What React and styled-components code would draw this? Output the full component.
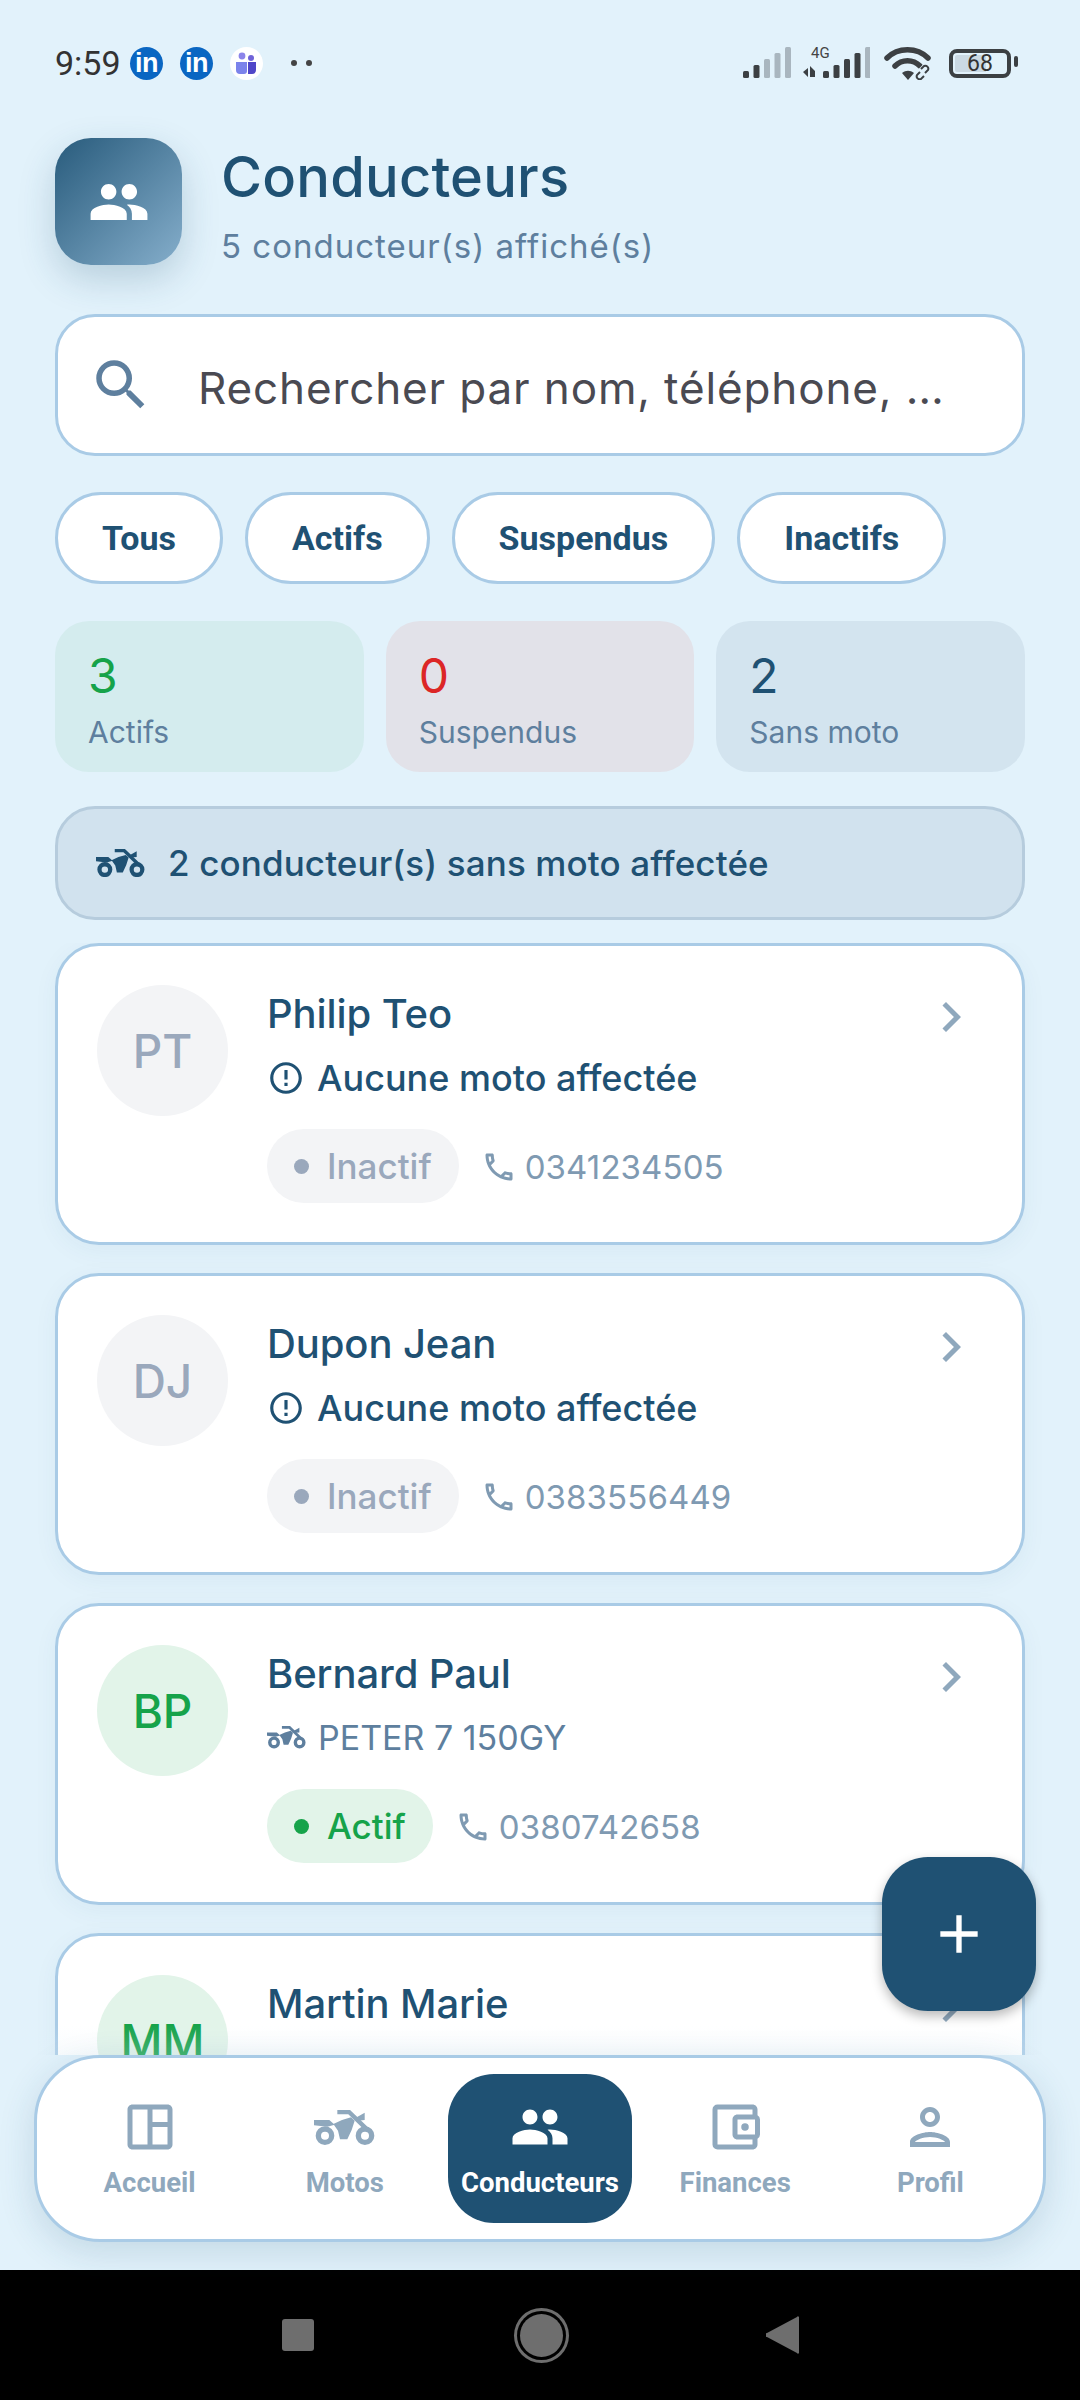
import React from "react";
import styled, { createGlobalStyle } from "styled-components";
import {
  MdPeople,
  MdSearch,
  MdChevronRight,
  MdErrorOutline,
  MdOutlineCall,
  MdAdd,
  MdOutlineSpaceDashboard,
  MdOutlineAccountBalanceWallet,
  MdOutlinePerson,
} from "react-icons/md";

const NAVY = "#1f5173";
const MUTED = "#5e7f9e";
const GREY = "#8fa8bd";
const SANS = '"Inter", "Noto Sans", sans-serif';

const Global = createGlobalStyle`
  html, body { margin: 0; padding: 0; background: #000; }
  * { box-sizing: border-box; }
  body { font-family: ${SANS}; }
`;

const Page = styled.div`
  width: 1080px;
  height: 2400px;
  display: flex;
  flex-direction: column;
  overflow: hidden;
`;
const Screen = styled.div`
  position: relative;
  height: 2270px;
  background: #e2f2fb;
  display: flex;
  flex-direction: column;
`;
const StatusBar = styled.div`
  height: 44px;
  margin: 41px 69px 0 55px;
  display: flex;
  align-items: center;
  justify-content: space-between;
`;
const StatusLeft = styled.div`
  display: flex;
  align-items: center;
`;
const Time = styled.span`
  font: 400 34px "Roboto", sans-serif;
  color: #333;
  width: 75px;
  white-space: nowrap;
`;
const AppBadge = styled.span`
  width: 33px;
  height: 33px;
  border-radius: 50%;
  background: #0a66c2;
  color: #fff;
  font: 700 27px/33px "Liberation Sans", sans-serif;
  text-align: center;
  letter-spacing: -0.5px;
  margin-right: 17px;
`;
const TeamsBadge = styled.span`
  width: 33px;
  height: 33px;
  border-radius: 50%;
  background: #fff;
  display: flex;
  align-items: center;
  justify-content: center;
`;
const Dots = styled.span`
  display: flex;
  gap: 9px;
  margin-left: 28px;
`;
const Dot = styled.span`
  width: 6px;
  height: 6px;
  border-radius: 50%;
  background: #444;
`;
const StatusRight = styled.div`
  display: flex;
  align-items: center;
`;
const FourG = styled.span`
  position: relative;
  display: block;
  width: 67px;
  height: 32px;
  margin: 0 14px 0 12px;
`;
const FourGLabel = styled.span`
  position: absolute;
  left: 8px;
  top: -3px;
  font: 400 15px "Roboto", sans-serif;
  color: #444;
`;
const Battery = styled.span`
  position: relative;
  width: 62px;
  height: 29px;
  border: 4px solid #3c4043;
  border-radius: 8px;
  margin-left: 16px;
  display: flex;
  align-items: center;
  justify-content: center;
  background: linear-gradient(90deg, #cbd9e3 0 62%, transparent 62%);
  background-clip: content-box;
  padding: 2px;
  font: 400 23px "Roboto", sans-serif;
  color: #333;
  &::after {
    content: "";
    position: absolute;
    right: -11px;
    top: 3px;
    width: 4px;
    height: 11px;
    border-radius: 2px;
    background: #3c4043;
  }
`;
const Header = styled.div`
  margin: 53px 55px 0 55px;
  height: 127px;
  display: flex;
  align-items: center;
  gap: 39px;
`;
const HeaderIcon = styled.div`
  width: 127px;
  height: 127px;
  border-radius: 36px;
  background: linear-gradient(135deg, #285b7c, #85aecb);
  box-shadow: 0 14px 36px rgba(31, 81, 115, 0.22);
  display: flex;
  align-items: center;
  justify-content: center;
  color: #fff;
`;
const TitleBlock = styled.div`
  display: flex;
  flex-direction: column;
  padding-top: 6px;
`;
const Title = styled.div`
  font-size: 56px;
  line-height: 66px;
  font-weight: 500;
  color: ${NAVY};
  letter-spacing: 0.2px;
`;
const Subtitle = styled.div`
  font-size: 33px;
  line-height: 40px;
  font-weight: 400;
  color: ${MUTED};
  margin-top: 16px;
  letter-spacing: 1px;
`;
const SearchBox = styled.div`
  margin: 49px 55px 0;
  height: 142px;
  background: #fff;
  border: 3px solid #a9cbe6;
  border-radius: 40px;
  display: flex;
  align-items: center;
  padding-left: 30px;
  gap: 44px;
  color: ${MUTED};
`;
const Placeholder = styled.span`
  font-size: 44px;
  color: #4a4a52;
  white-space: nowrap;
  letter-spacing: 0.87px;
  padding-top: 5px;
`;
const Chips = styled.div`
  margin: 36px 55px 0;
  display: flex;
  gap: 22px;
`;
const Chip = styled.div`
  height: 92px;
  padding: 0 44px;
  border: 3px solid #a9cbe6;
  border-radius: 46px;
  background: #fff;
  display: flex;
  align-items: center;
  font: 700 34px "Roboto", sans-serif;
  color: ${NAVY};
`;
const Stats = styled.div`
  margin: 37px 55px 0;
  display: grid;
  grid-template-columns: repeat(3, 1fr);
  gap: 22px;
`;
const Stat = styled.div`
  height: 151px;
  border-radius: 34px;
  background: ${(p) => p.$bg};
  padding: 31px 33px 0;
`;
const StatNumber = styled.div`
  font-size: 48px;
  line-height: 48px;
  font-weight: 400;
  color: ${(p) => p.$color};
`;
const StatLabel = styled.div`
  font-size: 30px;
  line-height: 36px;
  color: ${MUTED};
  margin-top: 14px;
`;
const Alert = styled.div`
  margin: 34px 55px 0;
  height: 114px;
  border-radius: 40px;
  background: #d1e2ee;
  border: 3px solid #b6ccdd;
  display: flex;
  align-items: center;
  gap: 23px;
  padding-left: 38px;
  font-size: 35px;
  letter-spacing: 0.12px;
  font-weight: 500;
  color: ${NAVY};
`;
const ListClip = styled.div`
  position: relative;
  margin-top: 23px;
  flex: 1;
  min-height: 0;
  overflow: hidden;
  padding: 0 55px;
  display: flex;
  flex-direction: column;
  gap: 28px;
  &::after {
    content: "";
    position: absolute;
    left: 0;
    right: 0;
    bottom: 0;
    height: 30px;
    background: linear-gradient(rgba(226, 242, 251, 0), rgba(226, 242, 251, 0.22));
  }
`;
const Card = styled.div`
  flex: none;
  position: relative;
  height: 302px;
  background: #fff;
  border: 3px solid #a9cbe6;
  border-radius: 44px;
  box-shadow: 0 6px 24px rgba(31, 81, 115, 0.05);
  padding: 39px 38px 39px 39px;
  display: flex;
  gap: 39px;
`;
const Avatar = styled.div`
  flex: none;
  width: 131px;
  height: 131px;
  border-radius: 50%;
  background: ${(p) => p.$bg};
  color: ${(p) => p.$color};
  display: flex;
  align-items: center;
  justify-content: center;
  font-size: 46px;
  font-weight: 500;
`;
const CardBody = styled.div`
  display: flex;
  flex-direction: column;
  align-items: flex-start;
`;
const Name = styled.div`
  font-size: 40px;
  line-height: 48px;
  font-weight: 500;
  letter-spacing: -0.1px;
  color: ${NAVY};
  margin-top: 5px;
`;
const MotoLine = styled.div`
  display: flex;
  align-items: center;
  gap: 12px;
  margin-top: 17px;
  height: 48px;
  font-size: ${(p) => (p.$none ? 36 : 34)}px;
  font-weight: ${(p) => (p.$none ? 500 : 400)};
  color: ${(p) => (p.$none ? NAVY : MUTED)};
`;
const MetaRow = styled.div`
  display: flex;
  align-items: center;
  margin-top: 29px;
`;
const Pill = styled.div`
  height: 74px;
  padding: 0 27px;
  border-radius: 37px;
  background: ${(p) => p.$bg};
  color: ${(p) => p.$color};
  display: flex;
  align-items: center;
  gap: 18px;
  font-size: 35px;
  font-weight: 500;
`;
const PillDot = styled.span`
  width: 15px;
  height: 15px;
  border-radius: 50%;
  background: currentColor;
`;
const Phone = styled.div`
  display: flex;
  align-items: center;
  gap: 8px;
  margin-left: 22px;
  padding-top: 2px;
  font-size: 33px;
  color: #7f9ab2;
  letter-spacing: 0.1px;
`;
const Chevron = styled.div`
  position: absolute;
  right: 41px;
  top: 41px;
  color: ${GREY};
  display: flex;
`;
const Fab = styled.div`
  position: absolute;
  left: 882px;
  top: 1857px;
  width: 154px;
  height: 154px;
  border-radius: 46px;
  background: ${NAVY};
  box-shadow: 0 5px 12px rgba(0, 0, 0, 0.28);
  color: #fff;
  display: flex;
  align-items: center;
  justify-content: center;
`;
const Nav = styled.div`
  flex: none;
  margin: 0 34px 28px;
  height: 187px;
  background: #fff;
  border: 3px solid #a9cbe6;
  border-radius: 66px;
  box-shadow: 0 10px 36px rgba(31, 81, 115, 0.16);
  display: grid;
  grid-template-columns: repeat(5, 1fr);
  padding: 16px 15px;
  position: relative;
`;
const NavItem = styled.div`
  display: flex;
  flex-direction: column;
  align-items: center;
  padding-top: 23px;
  border-radius: 46px;
  margin: 0 5.5px;
  background: ${(p) => (p.$active ? NAVY : "transparent")};
  color: ${(p) => (p.$active ? "#fff" : GREY)};
  font: 700 27.5px "Roboto", sans-serif;
  white-space: nowrap;
`;
const NavIcon = styled.div`
  height: 60px;
  display: flex;
  align-items: center;
  justify-content: center;
  margin-bottom: 9px;
`;
const SystemNav = styled.div`
  flex: 1;
  background: #000;
  display: flex;
  align-items: center;
  justify-content: center;
`;
const SysSquare = styled.span`
  width: 32px;
  height: 32px;
  border-radius: 3px;
  background: #6e6e6e;
`;
const SysCircle = styled.span`
  width: 43px;
  height: 43px;
  border-radius: 50%;
  background: #6e6e6e;
  box-shadow: 0 0 0 3px #000, 0 0 0 6px #6e6e6e;
  margin: 0 203px 0 206px;
`;

const Moto = ({ width = 61, color = "currentColor" }) => (
  <svg width={width} viewBox="0 0 183 105" fill={color} aria-hidden="true">
    <path d="M0 30h46l16 14-22 6-40-4z" />
    <path d="M58 42l26-12 27-8 11 10-9 28-13 28H78l-6-26z" />
    <path d="M70 6h35l58 56" fill="none" stroke={color} strokeWidth="13" />
    <path d="M124 24l28-16v22l-20 2z" />
    <circle cx="33" cy="77" r="20" fill="none" stroke={color} strokeWidth="16" />
    <circle cx="153" cy="77" r="20" fill="none" stroke={color} strokeWidth="16" />
  </svg>
);

const Bars = ({ n, on, x = 0 }) => (
  <>
    {Array.from({ length: n }).map((_, i) => {
      const h = 7 + i * 6;
      return (
        <rect
          key={i}
          x={x + i * 10.5}
          y={31 - h}
          width="6"
          height={h}
          rx="1.5"
          fill={i < on ? "#3c4043" : "#a9b6bf"}
        />
      );
    })}
  </>
);

const Wifi = () => (
  <svg width="49" height="34" viewBox="0 0 49 34" fill="none" aria-hidden="true">
    <path d="M3 12C14 1 33 1 44 12" stroke="#3c4043" strokeWidth="5.5" strokeLinecap="round" />
    <path d="M11 20c7-7 18-7 25 0" stroke="#3c4043" strokeWidth="5.5" strokeLinecap="round" />
    <path d="M18 27c4-3 8-3 12 0l-6 7z" fill="#3c4043" />
    <path d="M34 30l9-9" stroke="#e2f2fb" strokeWidth="9" />
    <path d="M36 26l-3 3a3 3 0 0 0 4 4l3-3M41 27l3-3a3 3 0 0 0-4-4l-3 3" stroke="#3c4043" strokeWidth="2" />
  </svg>
);

const Teams = () => (
  <svg width="23" height="23" viewBox="0 0 23 23" aria-hidden="true">
    <circle cx="7" cy="4" r="3.4" fill="#8b84ea" />
    <circle cx="16" cy="6" r="3" fill="#6f63d8" />
    <path d="M1 10h11v9a3 3 0 0 1-3 3H5a4 4 0 0 1-4-4z" fill="#7b83eb" />
    <path d="M13 10h8v8a4 4 0 0 1-4 4h-4z" fill="#4f46c8" />
  </svg>
);

const drivers = [
  { i: "PT", name: "Philip Teo", moto: null, active: false, phone: "0341234505" },
  { i: "DJ", name: "Dupon Jean", moto: null, active: false, phone: "0383556449" },
  { i: "BP", name: "Bernard Paul", moto: "PETER 7 150GY", active: true, phone: "0380742658" },
  { i: "MM", name: "Martin Marie", active: true, partial: true },
];

const stats = [
  { n: "3", l: "Actifs", bg: "#d4ecee", c: "#16a34a" },
  { n: "0", l: "Suspendus", bg: "#e2e2e9", c: "#dc2626" },
  { n: "2", l: "Sans moto", bg: "#d3e4ef", c: NAVY },
];

const navs = [
  { l: "Accueil", icon: <MdOutlineSpaceDashboard size={60} /> },
  { l: "Motos", icon: <Moto /> },
  { l: "Conducteurs", icon: <MdPeople size={60} />, active: true },
  { l: "Finances", icon: <MdOutlineAccountBalanceWallet size={60} /> },
  { l: "Profil", icon: <MdOutlinePerson size={60} /> },
];

export default function App() {
  return (
    <Page>
      <Global />
      <Screen>
        <StatusBar>
          <StatusLeft>
            <Time>9:59</Time>
            <AppBadge>in</AppBadge>
            <AppBadge>in</AppBadge>
            <TeamsBadge>
              <Teams />
            </TeamsBadge>
            <Dots>
              <Dot />
              <Dot />
            </Dots>
          </StatusLeft>
          <StatusRight>
            <svg width="48" height="32" aria-hidden="true">
              <Bars n={5} on={2} />
            </svg>
            <FourG>
              <FourGLabel>4G</FourGLabel>
              <svg width="67" height="32" aria-hidden="true">
                <path d="M0 25l5-4v9zM7 30v-11l5 5v6z" fill="#3c4043" />
                <Bars n={5} on={4} x={20} />
              </svg>
            </FourG>
            <Wifi />
            <Battery>68</Battery>
          </StatusRight>
        </StatusBar>
        <Header>
          <HeaderIcon>
            <MdPeople size={62} />
          </HeaderIcon>
          <TitleBlock>
            <Title>Conducteurs</Title>
            <Subtitle>5 conducteur(s) affiché(s)</Subtitle>
          </TitleBlock>
        </Header>
        <SearchBox>
          <MdSearch size={66} />
          <Placeholder>Rechercher par nom, téléphone, …</Placeholder>
        </SearchBox>
        <Chips>
          {["Tous", "Actifs", "Suspendus", "Inactifs"].map((c) => (
            <Chip key={c}>{c}</Chip>
          ))}
        </Chips>
        <Stats>
          {stats.map((s) => (
            <Stat key={s.l} $bg={s.bg}>
              <StatNumber $color={s.c}>{s.n}</StatNumber>
              <StatLabel>{s.l}</StatLabel>
            </Stat>
          ))}
        </Stats>
        <Alert>
          <Moto width={49} />
          2 conducteur(s) sans moto affectée
        </Alert>
        <ListClip>
          {drivers.map((d) => (
            <Card key={d.i}>
              <Avatar
                $bg={d.active ? "#e2f4e9" : "#f3f4f6"}
                $color={d.active ? "#16a34a" : "#9aa8bc"}
              >
                {d.i}
              </Avatar>
              <CardBody>
                <Name>{d.name}</Name>
                {!d.partial &&
                  (d.moto ? (
                    <MotoLine>
                      <Moto width={39} />
                      {d.moto}
                    </MotoLine>
                  ) : (
                    <MotoLine $none>
                      <MdErrorOutline size={38} />
                      Aucune moto affectée
                    </MotoLine>
                  ))}
                {!d.partial && (
                  <MetaRow>
                    <Pill
                      $bg={d.active ? "#e2f4e9" : "#f3f4f6"}
                      $color={d.active ? "#16a34a" : "#9aa8bc"}
                    >
                      <PillDot />
                      {d.active ? "Actif" : "Inactif"}
                    </Pill>
                    <Phone>
                      <MdOutlineCall size={36} />
                      {d.phone}
                    </Phone>
                  </MetaRow>
                )}
              </CardBody>
              <Chevron>
                <MdChevronRight size={60} />
              </Chevron>
            </Card>
          ))}
        </ListClip>
        <Nav>
          {navs.map((n) => (
            <NavItem key={n.l} $active={n.active}>
              <NavIcon>{n.icon}</NavIcon>
              {n.l}
            </NavItem>
          ))}
        </Nav>
        <Fab>
          <MdAdd size={64} />
        </Fab>
      </Screen>
      <SystemNav>
        <SysSquare />
        <SysCircle />
        <svg width="33" height="38" viewBox="0 0 33 38" aria-hidden="true">
          <path d="M33 2v34a1 1 0 0 1-2 1L1 21a2 2 0 0 1 0-4L31 1a1 1 0 0 1 2 1z" fill="#6e6e6e" />
        </svg>
      </SystemNav>
    </Page>
  );
}
